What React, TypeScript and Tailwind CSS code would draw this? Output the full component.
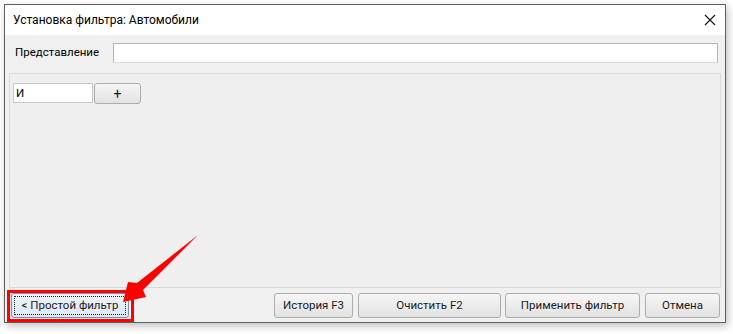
import React from "react";

const font = { fontFamily: 'Roboto, "Noto Sans", sans-serif' };

function Btn({ w, children, focus }: { w: string; children: React.ReactNode; focus?: boolean }) {
  return (
    <div
      className={`${w} h-[25px] rounded-[3px] border flex items-center justify-center text-[11.5px] text-[#1b1b1b] ${
        focus
          ? "border-[#7a8fb0] bg-gradient-to-b from-[#eef4fc] to-[#dde7f5]"
          : "border-[#adadad] bg-gradient-to-b from-[#f6f6f6] to-[#e2e2e2]"
      }`}
    >
      {focus ? (
        <div className="m-[2px] w-full h-[19px] border border-dotted border-[#222] flex items-center justify-center">
          {children}
        </div>
      ) : (
        children
      )}
    </div>
  );
}

export default function App() {
  return (
    <div className="relative w-[733px] h-[334px] bg-white overflow-hidden" style={font}>
      <div className="ml-[4px] mt-[4px] w-[722px] h-[319px] border border-[#5f5f5f] bg-[#f0f0f0] flex flex-col shadow-[2px_3px_8px_rgba(0,0,0,0.25)]">
        <div className="h-[30px] bg-white flex items-center justify-between pl-[8px] pr-[9px] shrink-0">
          <span className="text-[12px] text-black">Установка фильтра: Автомобили</span>
          <svg width="12" height="12" viewBox="0 0 12 12">
            <path d="M1 1 L11 11 M11 1 L1 11" stroke="#111" strokeWidth="1.1" />
          </svg>
        </div>
        <div className="flex items-center pt-[8px] pl-[10px] pr-[7px] shrink-0">
          <span className="w-[98px] text-[11.5px] text-black">Представление</span>
          <div className="flex-1 h-[20px] bg-white border border-[#b4b4b4] border-b-[#d8d8e0]" />
        </div>
        <div className="mx-[4px] mt-[10px] h-[215px] border border-[#dadada] bg-[#efefef] pt-[9px] pl-[3px]">
          <div className="flex items-start">
            <div className="w-[80px] h-[20px] bg-white border border-[#c8c8c8] text-[11.5px] text-black pl-[2px] leading-[18px]">
              И
            </div>
            <div className="ml-[1px] w-[47px] h-[21px] rounded-[3px] border border-[#adadad] bg-gradient-to-b from-[#f6f6f6] to-[#e2e2e2] flex items-center justify-center text-[14px] text-[#1b1b1b] leading-none">
              +
            </div>
          </div>
        </div>
        <div className="flex items-center mt-[5px] pl-[6px] pr-[5px]">
          <Btn w="w-[118px]" focus>
            &lt; Простой фильтр
          </Btn>
          <div className="flex-1" />
          <div className="flex">
            <Btn w="w-[79px]">История F3</Btn>
            <div className="w-[5px]" />
            <Btn w="w-[143px]">Очистить F2</Btn>
            <div className="w-[4px]" />
            <Btn w="w-[135px]">Применить фильтр</Btn>
            <div className="w-[5px]" />
            <Btn w="w-[75px]">Отмена</Btn>
          </div>
        </div>
      </div>
      <div className="absolute left-[7px] top-[290px] w-[127px] h-[32px] border-[3px] border-[#ff0000]" />
      <svg className="absolute left-0 top-0" width="733" height="334" viewBox="0 0 733 334">
        <polygon points="198,235 143,290 146,297 123,302 128,282 137,283" fill="#ff0000" />
      </svg>
    </div>
  );
}
